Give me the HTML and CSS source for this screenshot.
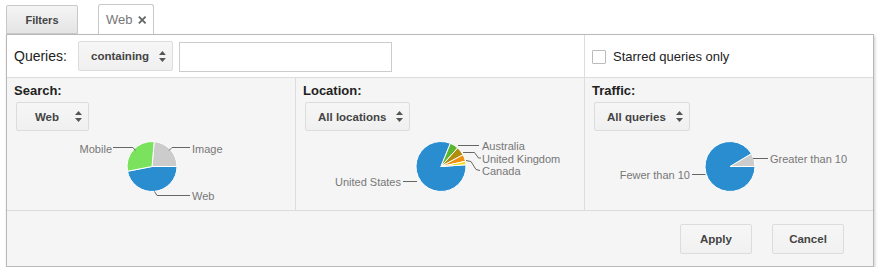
FILE: index.html
```html
<!DOCTYPE html>
<html lang="en">
<head>
    <meta charset="UTF-8">
    <title>Search queries filters</title>
    <link rel="stylesheet" href="styles.css">
</head>
<body>
    <div class="toolbar">
        <button class="filters-btn">Filters</button>
        <span class="filter-tag">Web
            <svg class="tag-close" width="10" height="10" viewBox="0 0 10 10"><path d="M1 1L9 9M9 1L1 9"/></svg>
        </span>
    </div>

    <div class="panel">
        <div class="top-row">
            <div class="queries">
                <span class="queries-label">Queries:</span>
                <div class="select">
                    <span class="select-text">containing</span>
                    <svg class="select-arrows" width="7" height="11" viewBox="0 0 7 11"><path d="M3.5 0L7 4H0Z M0 7H7L3.5 11Z"/></svg>
                </div>
                <input class="query-input" type="text">
            </div>
            <label class="starred">
                <span class="checkbox"></span>
                Starred queries only
            </label>
        </div>

        <div class="charts-row">
            <div class="chart-col">
                <div class="col-label">Search:</div>
                <div class="select">
                    <span class="select-text">Web</span>
                    <svg class="select-arrows" width="7" height="11" viewBox="0 0 7 11"><path d="M3.5 0L7 4H0Z M0 7H7L3.5 11Z"/></svg>
                </div>
                <svg class="pie" width="288" height="70" viewBox="0 0 288 70">
                    <path class="slice" fill="#cccccc" d="M145 32.5L147.18 7.6A25 25 0 0 1 170 32.5Z"/>
                    <path class="slice" fill="#2a8dd0" d="M145 32.5L170 32.5A25 25 0 0 1 120.46 37.27Z"/>
                    <path class="slice" fill="#7ae25c" d="M145 32.5L120.46 37.27A25 25 0 0 1 147.18 7.6Z"/>
                    <polyline class="leader" points="106,13.5 126,13.5 128.5,16.5"/>
                    <polyline class="leader" points="162,16.5 165,13.5 183,13.5"/>
                    <polyline class="leader" points="147.5,57.5 150,61.5 183,61.5"/>
                    <text class="pie-label" x="105" y="18.5" text-anchor="end">Mobile</text>
                    <text class="pie-label" x="185" y="18.5">Image</text>
                    <text class="pie-label" x="185" y="65.5">Web</text>
                </svg>
            </div>
            <div class="chart-col">
                <div class="col-label">Location:</div>
                <div class="select">
                    <span class="select-text">All locations</span>
                    <svg class="select-arrows" width="7" height="11" viewBox="0 0 7 11"><path d="M3.5 0L7 4H0Z M0 7H7L3.5 11Z"/></svg>
                </div>
                <svg class="pie" width="288" height="70" viewBox="0 0 288 70">
                    <path class="slice" fill="#2a8dd0" d="M145 32.5L169.94 30.76A25 25 0 1 1 154.37 9.32Z"/>
                    <path class="slice" fill="#5cb531" d="M145 32.5L154.37 9.32A25 25 0 0 1 161.73 13.92Z"/>
                    <path class="slice" fill="#b08d0b" d="M145 32.5L161.73 13.92A25 25 0 0 1 167.07 20.76Z"/>
                    <path class="slice" fill="#f0900f" d="M145 32.5L167.07 20.76A25 25 0 0 1 169.45 27.3Z"/>
                    <path class="slice" fill="#f2dc1a" d="M145 32.5L169.45 27.3A25 25 0 0 1 169.94 30.76Z"/>
                    <polyline class="leader" points="162,11.5 183,11.5"/>
                    <polyline class="leader" points="167,18.5 178.5,18.5 182.5,24 185,24"/>
                    <polyline class="leader" points="170,26.5 175,27.5 180,35.5 184,36.5"/>
                    <polyline class="leader" points="107,47.5 121,47.5"/>
                    <text class="pie-label" x="186" y="16">Australia</text>
                    <text class="pie-label" x="186" y="28.5">United Kingdom</text>
                    <text class="pie-label" x="186" y="40.5">Canada</text>
                    <text class="pie-label" x="105" y="51.5" text-anchor="end">United States</text>
                </svg>
            </div>
            <div class="chart-col">
                <div class="col-label">Traffic:</div>
                <div class="select">
                    <span class="select-text">All queries</span>
                    <svg class="select-arrows" width="7" height="11" viewBox="0 0 7 11"><path d="M3.5 0L7 4H0Z M0 7H7L3.5 11Z"/></svg>
                </div>
                <svg class="pie" width="288" height="70" viewBox="0 0 288 70">
                    <path class="slice" fill="#cccccc" d="M145 32.5L166.43 19.62A25 25 0 0 1 170 32.5Z"/>
                    <path class="slice" fill="#2a8dd0" d="M145 32.5L170 32.5A25 25 0 1 1 166.43 19.62Z"/>
                    <polyline class="leader" points="168,24.5 183,24.5"/>
                    <polyline class="leader" points="107,40.5 120.5,40.5"/>
                    <text class="pie-label" x="185" y="29">Greater than 10</text>
                    <text class="pie-label" x="105" y="44.5" text-anchor="end">Fewer than 10</text>
                </svg>
            </div>
        </div>

        <div class="actions">
            <button class="btn">Apply</button>
            <button class="btn">Cancel</button>
        </div>
    </div>
</body>
</html>
```

FILE: styles.css
```css
* {
    margin: 0;
    padding: 0;
    box-sizing: border-box;
}

body {
    font-family: "Liberation Sans", Arial, sans-serif;
    background: #fff;
    color: #222;
}

.toolbar {
    display: flex;
    align-items: flex-end;
    gap: 20px;
    height: 34px;
    margin-left: 6px;
}

.filters-btn {
    width: 72px;
    height: 29px;
    border: 1px solid #c8c8c8;
    border-radius: 2px 2px 0 0;
    background: linear-gradient(#f5f5f5, #e4e4e4);
    font: bold 11px "Liberation Sans", Arial, sans-serif;
    color: #444;
}

.filter-tag {
    display: flex;
    align-items: center;
    gap: 5px;
    width: 56px;
    height: 30px;
    padding: 0 7px;
    border: 1px solid #c8c8c8;
    border-bottom: none;
    border-radius: 3px 3px 0 0;
    background: #fff;
    font-size: 13px;
    color: #777;
}

.tag-close path {
    stroke: #666;
    stroke-width: 2.2;
    fill: none;
}

.panel {
    width: 868px;
    margin-left: 6px;
    border: 1px solid #b8b8b8;
    box-shadow: 1px 2px 3px rgba(0, 0, 0, 0.2);
    background: #f5f5f5;
}

.top-row {
    display: grid;
    grid-template-columns: 578px 1fr;
    height: 43px;
    background: #fff;
    border-bottom: 1px solid #ddd;
}

.queries {
    display: flex;
    align-items: center;
    padding-left: 7px;
    border-right: 1px solid #ddd;
}

.queries-label {
    font-size: 14px;
    width: 64px;
}

.select {
    display: inline-flex;
    align-items: center;
    gap: 10px;
    min-width: 73px;
    height: 29px;
    padding: 0 6px 0 12px;
    border: 1px solid #dcdcdc;
    border-radius: 2px;
    background: linear-gradient(#f6f6f6, #f0f0f0);
    font: bold 11.5px "Liberation Sans", Arial, sans-serif;
    color: #444;
}

.select-text {
    flex: 1;
    text-align: center;
}

.select-arrows path {
    fill: #555;
}

.queries .select {
    height: 30px;
    width: 95px;
}

.query-input {
    width: 213px;
    height: 30px;
    margin-left: 6px;
    margin-top: 2px;
    border: 1px solid #ccc;
    background: #fff;
}

.starred {
    display: flex;
    align-items: center;
    gap: 7px;
    padding-left: 7px;
    padding-top: 1px;
    font-size: 13px;
    color: #222;
}

.checkbox {
    width: 14px;
    height: 14px;
    border: 1px solid #bbb;
    border-radius: 1px;
    background: #fff;
}

.charts-row {
    display: grid;
    grid-template-columns: 289px 289px 1fr;
    height: 133px;
    border-bottom: 1px solid #ddd;
}

.chart-col {
    padding: 5px 0 0 7px;
    border-right: 1px solid #ddd;
}

.chart-col:last-child {
    border-right: none;
}

.col-label {
    font-weight: bold;
    font-size: 13px;
    line-height: 15px;
    margin-bottom: 4px;
}

.chart-col .select {
    margin-left: 2px;
}

.pie {
    display: block;
    margin: 3px 0 0 -7px;
}

.slice {
    stroke: #fff;
    stroke-width: 1;
}

.leader {
    fill: none;
    stroke: #666;
    stroke-width: 1;
}

.pie-label {
    font: 11px "Liberation Sans", Arial, sans-serif;
    fill: #777;
}

.actions {
    display: flex;
    justify-content: flex-end;
    gap: 20px;
    height: 55px;
    padding: 13px 29px 0 0;
}

.btn {
    width: 72px;
    height: 30px;
    border: 1px solid #dcdcdc;
    border-radius: 2px;
    background: linear-gradient(#f6f6f6, #f1f1f1);
    font: bold 11.5px "Liberation Sans", Arial, sans-serif;
    color: #444;
}
```
